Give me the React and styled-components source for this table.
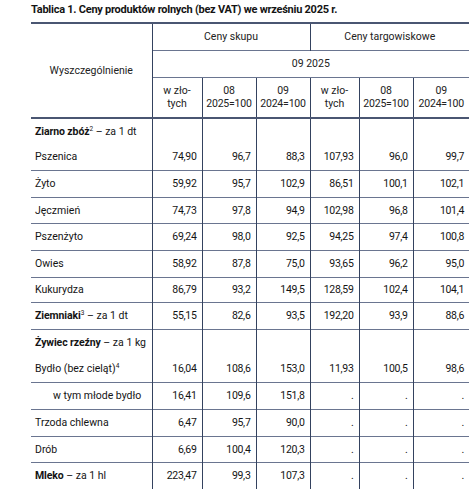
import React from "react";
import styled, { createGlobalStyle } from "styled-components";

const Global = createGlobalStyle`
  html, body { margin: 0; padding: 0; background: #fff; }
  body { font-family: Roboto, "Noto Sans", sans-serif; color: #141414; }
`;

const Page = styled.div`
  width: 474px;
  height: 494px;
  overflow: hidden;
  padding: 3px 5px 0 31px;
  box-sizing: border-box;
`;

const Title = styled.h1`
  margin: 0 0 5px 0;
  font-size: 11px;
  font-weight: 700;
  line-height: 14px;
  letter-spacing: -0.25px;
  color: #141414;
`;

const Table = styled.table`
  border-collapse: collapse;
  table-layout: fixed;
  width: 438px;
  font-size: 10.5px;
  line-height: 13px;
`;

const Col = styled.col`
  width: ${(p) => p.$w}px;
`;

const HeadRow = styled.tr`
  height: ${(p) => p.$h}px;
`;

const HCell = styled.th`
  font-weight: 400;
  text-align: center;
  vertical-align: middle;
  padding: 0 2px;
  color: #222;
  letter-spacing: ${(p) => (p.$num ? "-0.2px" : "0")};
  border-left: ${(p) => (p.$first ? "none" : "1px solid #34425f")};
  border-top: ${(p) => (p.$top ? "2px solid #4a5672" : p.$line ? "1px solid #6a7590" : "none")};
  border-bottom: ${(p) => (p.$bottom ? "2px solid #4a5672" : "none")};
`;

const Row = styled.tr`
  height: ${(p) => p.$h}px;
  border-bottom: ${(p) => (p.$noLine ? "none" : "1px solid #6a7590")};
`;

const Label = styled.td`
  padding: 0 2px 0 ${(p) => (p.$indent ? 22 : 4)}px;
  white-space: nowrap;
  vertical-align: middle;
`;

const Num = styled.td`
  text-align: right;
  padding: 0 5px 0 0;
  letter-spacing: -0.3px;
  border-left: 1px solid #34425f;
  vertical-align: middle;
`;

const Bold = styled.b`
  font-weight: 700;
  letter-spacing: -0.1px;
`;

const Sup = styled.sup`
  font-size: 6.5px;
  line-height: 0;
  vertical-align: 4px;
`;

const colWidths = [121, 50, 54, 54, 49, 54, 56];

const rows = [
  { label: <><Bold>Ziarno zbóż</Bold><Sup>2</Sup> – za 1 dt</>, vals: null, h: 26, noLine: true },
  { label: "Pszenica", vals: ["74,90", "96,7", "88,3", "107,93", "96,0", "99,7"], h: 26 },
  { label: "Żyto", vals: ["59,92", "95,7", "102,9", "86,51", "100,1", "102,1"], h: 27 },
  { label: "Jęczmień", vals: ["74,73", "97,8", "94,9", "102,98", "96,8", "101,4"], h: 26 },
  { label: "Pszenżyto", vals: ["69,24", "98,0", "92,5", "94,25", "97,4", "100,8"], h: 27 },
  { label: "Owies", vals: ["58,92", "87,8", "75,0", "93,65", "96,2", "95,0"], h: 27 },
  { label: "Kukurydza", vals: ["86,79", "93,2", "149,5", "128,59", "102,4", "104,1"], h: 25 },
  { label: <><Bold>Ziemniaki</Bold><Sup>3</Sup> – za 1 dt</>, vals: ["55,15", "82,6", "93,5", "192,20", "93,9", "88,6"], h: 27 },
  { label: <><Bold>Żywiec rzeźny</Bold> – za 1 kg</>, vals: null, h: 26, noLine: true },
  { label: <>Bydło (bez cieląt)<Sup>4</Sup></>, vals: ["16,04", "108,6", "153,0", "11,93", "100,5", "98,6"], h: 27 },
  { label: "w tym młode bydło", indent: true, vals: ["16,41", "109,6", "151,8", ".", ".", "."], h: 27 },
  { label: "Trzoda chlewna", vals: ["6,47", "95,7", "90,0", ".", ".", "."], h: 27 },
  { label: "Drób", vals: ["6,69", "100,4", "120,3", ".", ".", "."], h: 26 },
  { label: <><Bold>Mleko</Bold> – za 1 hl</>, vals: ["223,47", "99,3", "107,3", ".", ".", "."], h: 27, noLine: true },
];

const subHeads = [
  ["w zło-", "tych"],
  ["08", "2025=100"],
  ["09", "2024=100"],
  ["w zło-", "tych"],
  ["08", "2025=100"],
  ["09", "2024=100"],
];

export default function App() {
  return (
    <>
      <Global />
      <Page>
        <Title>Tablica 1. Ceny produktów rolnych (bez VAT) we wrześniu 2025 r.</Title>
        <Table>
          <colgroup>
            {colWidths.map((w, i) => (
              <Col key={i} $w={w} />
            ))}
          </colgroup>
          <thead>
            <HeadRow $h={27}>
              <HCell $first $top $bottom rowSpan={3}>Wyszczególnienie</HCell>
              <HCell $top colSpan={3}>Ceny skupu</HCell>
              <HCell $top colSpan={3}>Ceny targowiskowe</HCell>
            </HeadRow>
            <HeadRow $h={27}>
              <HCell $line colSpan={6}>09 2025</HCell>
            </HeadRow>
            <HeadRow $h={41}>
              {subHeads.map(([a, b], i) => (
                <HCell key={i} $line $bottom $num={i % 3 !== 0}>
                  {a}
                  <br />
                  {b}
                </HCell>
              ))}
            </HeadRow>
          </thead>
          <tbody>
            {rows.map((r, i) => (
              <Row key={i} $h={r.h} $noLine={r.noLine}>
                <Label $indent={r.indent}>{r.label}</Label>
                {(r.vals || ["", "", "", "", "", ""]).map((v, j) => (
                  <Num key={j}>{v}</Num>
                ))}
              </Row>
            ))}
          </tbody>
        </Table>
      </Page>
    </>
  );
}
